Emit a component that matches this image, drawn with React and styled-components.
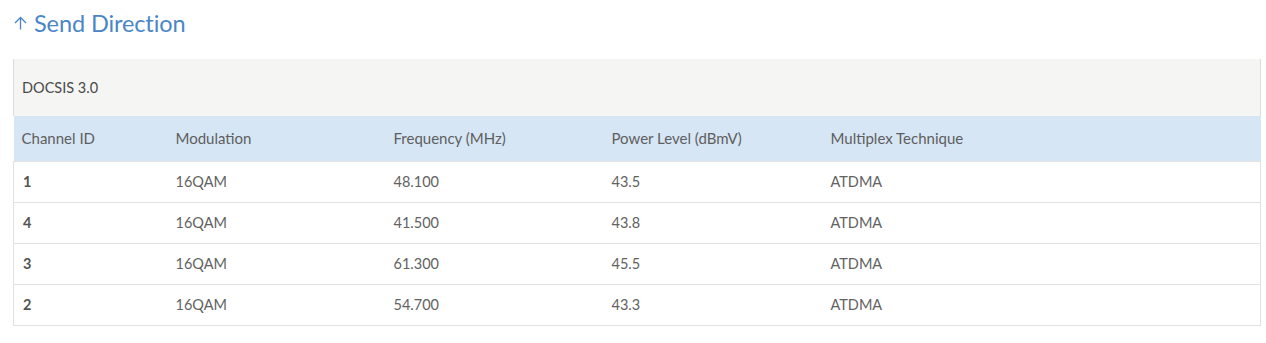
import React from "react";
import styled, { createGlobalStyle } from "styled-components";

const Global = createGlobalStyle`
  html, body { margin: 0; padding: 0; background: #fff; }
  body { font-family: Lato, "Open Sans", sans-serif; }
`;

const Page = styled.div`
  padding: 0 5px 0 13px;
  width: 1248px;
`;

const Heading = styled.h2`
  margin: 0;
  height: 45px;
  padding-top: 0;
  box-sizing: border-box;
  display: flex;
  align-items: center;
  gap: 7px;
  color: #4a86c6;
  font-size: 23.5px;
  font-weight: 400;
  letter-spacing: -0.1px;
  line-height: 28px;
  padding-left: 1px;
`;

const Caption = styled.div`
  margin-top: 14px;
  height: 57px;
  box-sizing: border-box;
  background: #f5f5f4;
  border-left: 1px solid #dcdcdc;
  border-right: 1px solid #dcdcdc;
  display: flex;
  align-items: center;
  padding-left: 8px;
  font-size: 14.5px;
  color: #4a4a4a;
`;

const Table = styled.table`
  width: 1248px;
  border-collapse: collapse;
  table-layout: fixed;
  font-size: 15px;
`;

const HeadRow = styled.tr`
  background: #d6e6f5;
  height: 45px;
`;

const Th = styled.th`
  text-align: left;
  font-weight: 400;
  color: #5e5e5e;
  padding: 0 0 0 8px;
`;

const Row = styled.tr`
  height: 41px;
  border: 1px solid #e2e2e2;
`;

const Td = styled.td`
  padding: 0 0 0 ${(p) => (p.$first ? 9 : 8)}px;
  color: ${(p) => (p.$first ? "#555" : "#626262")};
  font-weight: ${(p) => (p.$first ? 700 : 400)};
  font-size: 14.5px;
`;

const Arrow = () => (
  <svg width="13" height="14" viewBox="0 0 13 14" fill="none" stroke="#4a86c6" strokeWidth="1.3">
    <path d="M6.5 13.5V1.5M1 7l5.5-5.5L12 7" />
  </svg>
);

const rows = [
  ["1", "16QAM", "48.100", "43.5", "ATDMA"],
  ["4", "16QAM", "41.500", "43.8", "ATDMA"],
  ["3", "16QAM", "61.300", "45.5", "ATDMA"],
  ["2", "16QAM", "54.700", "43.3", "ATDMA"],
];

export default function App() {
  return (
    <Page>
      <Global />
      <Heading>
        <Arrow />
        Send Direction
      </Heading>
      <Caption>DOCSIS 3.0</Caption>
      <Table>
        <colgroup>
          <col style={{ width: 154 }} />
          <col style={{ width: 218 }} />
          <col style={{ width: 218 }} />
          <col style={{ width: 219 }} />
          <col />
        </colgroup>
        <thead>
          <HeadRow>
            <Th>Channel ID</Th>
            <Th>Modulation</Th>
            <Th>Frequency (MHz)</Th>
            <Th>Power Level (dBmV)</Th>
            <Th>Multiplex Technique</Th>
          </HeadRow>
        </thead>
        <tbody>
          {rows.map((r, i) => (
            <Row key={i}>
              {r.map((c, j) => (
                <Td key={j} $first={j === 0}>
                  {c}
                </Td>
              ))}
            </Row>
          ))}
        </tbody>
      </Table>
    </Page>
  );
}
